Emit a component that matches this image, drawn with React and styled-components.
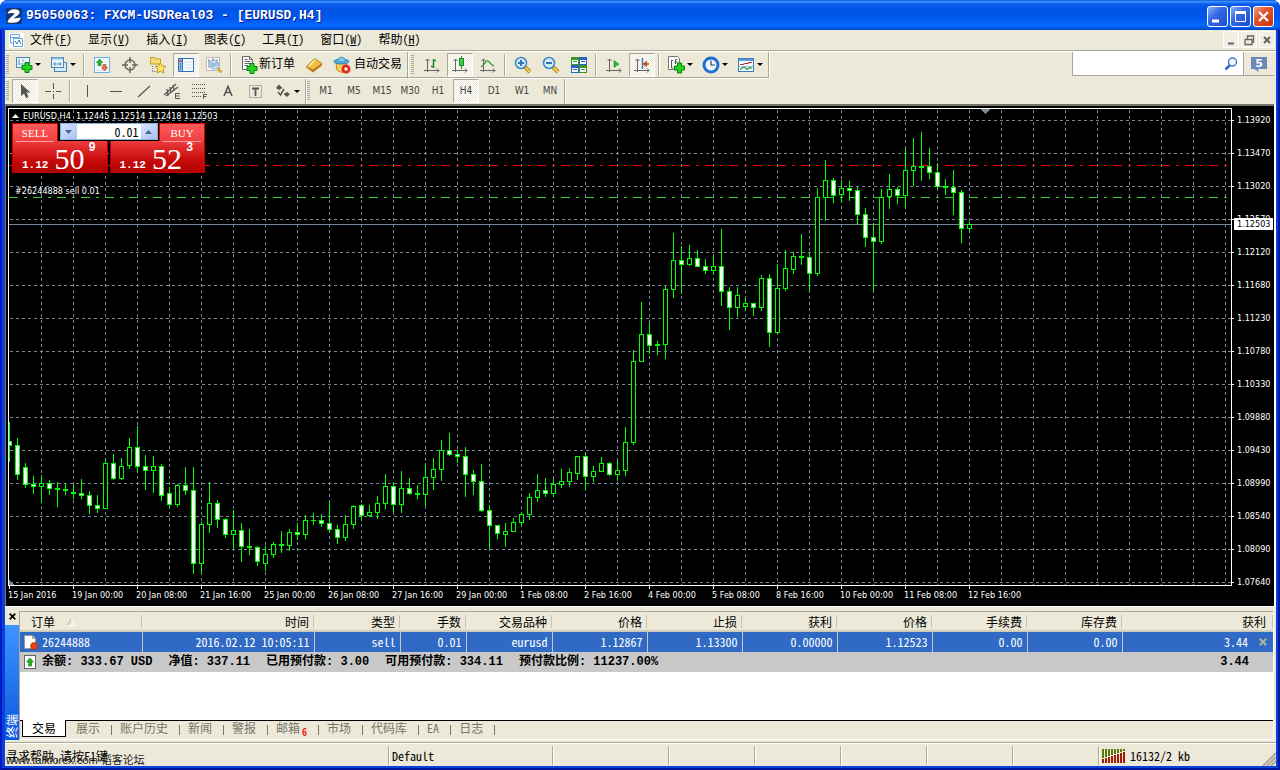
import React from "react";
import styled, { createGlobalStyle, css } from "styled-components";

const face = "#ece9d8";
const shade = "#aca899";
const slate = "#778899";

const Global = createGlobalStyle`
  * { box-sizing: border-box; }
  html, body { margin: 0; background: #fff; }
  body, button, input {
    font-family: "Noto Sans CJK SC", sans-serif;
    font-feature-settings: "hwid";
    font-size: 12px;
    line-height: 16px;
    color: #000;
  }
  button { border: 0; padding: 0; background: none; }
  ul, ol { list-style: none; margin: 0; padding: 0; }
  svg { display: block; flex: none; }
`;

/* ---------- window frame ---------- */

const Window = styled.div`
  display: flex;
  flex-direction: column;
  min-height: 100vh;
  padding: 0 4px 4px 5px;
  border-radius: 8px 8px 0 0;
  background: #0842d8;
  box-shadow: inset 2px 0 #0019c8, inset -2px 0 #0019a0, inset 0 -2px #00159c;
`;

const TitleBar = styled.header`
  display: flex;
  align-items: center;
  height: 30px;
  margin: 0 -4px 0 -5px;
  padding: 2px 6px 0 6px;
  border-radius: 8px 8px 0 0;
  background: linear-gradient(#0a4fd8 0, #3a93ff 5%, #0a5cee 14%, #0054e3 30%, #0058ee 60%, #0668ff 86%, #0351dd 96%, #0040b8 100%);
`;

const Title = styled.h1`
  flex: 1;
  margin: 0 0 0 4px;
  color: #fff;
  font: bold 13px/18px "Liberation Mono", monospace;
  text-shadow: 1px 1px #0a1883;
`;

const CaptionButtons = styled.div`
  display: flex;
  gap: 2px;
`;

const CaptionButton = styled.button`
  width: 21px;
  height: 21px;
  border: 1px solid #fff;
  border-radius: 3px;
  background: ${(p) =>
    p.$danger
      ? "linear-gradient(135deg, #f0a08a, #e0532b 40%, #c8330c)"
      : "linear-gradient(135deg, #8fb2f8, #3468e4 40%, #1c4ed0)"};
`;

/* ---------- menu ---------- */

const MenuBar = styled.nav`
  display: flex;
  align-items: center;
  height: 22px;
  padding-left: 4px;
  background: ${face};
  border-bottom: 1px solid #fff;
  box-shadow: inset 0 -1px ${shade};
`;

const MenuList = styled.ul`
  display: flex;
  flex: 1;
  gap: 16px;
  margin-left: 6px;
  padding-bottom: 4px;
`;

const MenuItem = styled.button`
  display: block;
  height: 18px;
  line-height: 16px;
`;

const MdiButton = styled.button`
  width: 16px;
  height: 17px;
  margin: 0 1px 2px;
  background: #f1efe4;
  border: 1px solid #fff;
`;

/* ---------- tool bars ---------- */

const ToolRow = styled.div`
  display: flex;
  justify-content: space-between;
  background: ${face};
`;

const Segments = styled.div`
  display: flex;
`;

const Segment = styled.div`
  display: flex;
  align-items: center;
  height: ${(p) => (p.$flat ? 25 : 27)}px;
  padding-bottom: 1px;
  border-right: 1px solid ${shade};
  border-bottom: ${(p) => (p.$flat ? "0" : "1px solid #fff")};
  box-shadow: 1px 0 #fff, inset 0 ${(p) => (p.$flat ? "0" : "-1px")} ${shade};
`;

const Grip = styled.span`
  width: 3px;
  height: 20px;
  margin: 0 ${(p) => (p.$wide ? 4 : 2)}px 0 ${(p) => (p.$wide ? 3 : 1)}px;
  background: repeating-linear-gradient(${shade} 0 1px, transparent 1px 2px);
`;

const Divider = styled.span`
  width: 2px;
  height: 22px;
  margin: 0 3px 0 2px;
  border-left: 1px solid ${shade};
  border-right: 1px solid #fff;
`;

const pressedLook = css`
  background: conic-gradient(#fff 25%, ${face} 0 50%, #fff 0 75%, ${face} 0) 0 0 / 2px 2px;
  border: 1px solid;
  border-color: ${shade} #fff #fff ${shade};
`;

const ToolButton = styled.button`
  display: flex;
  align-items: center;
  justify-content: center;
  width: 26px;
  height: 24px;
  margin: 0 1px;
  ${(p) => p.$pressed && pressedLook}
`;

const DropButton = styled.button`
  display: flex;
  align-items: center;
  gap: 2px;
  width: 35px;
  height: 24px;
  padding-left: 4px;
  &::after {
    content: "";
    border: 3px solid transparent;
    border-top-color: #000;
    border-bottom: 0;
  }
`;

const LabelButton = styled.button`
  display: flex;
  align-items: center;
  gap: ${(p) => p.$gap}px;
  height: 24px;
  padding: 0 5px;
  span { padding-bottom: 4px; }
`;

const PeriodButton = styled(ToolButton)`
  color: #444;
  font: 10px/14px "DejaVu Sans Condensed", "Noto Sans", sans-serif;
`;

const SearchBox = styled.form`
  display: flex;
  align-self: flex-start;
  height: 24px;
  margin-right: 2px;
  border-left: 1px solid ${shade};
  border-bottom: 1px solid ${shade};
`;

const SearchField = styled.label`
  display: flex;
  align-items: center;
  width: 171px;
  padding-right: 5px;
  background: #fff;
  border-right: 1px solid ${shade};
  input { flex: 1; min-width: 0; border: 0; outline: 0; background: none; }
`;

const ChatButton = styled.button`
  display: flex;
  align-items: center;
  justify-content: center;
  width: 30px;
`;

/* ---------- chart ---------- */

const Chart = styled.main`
  position: relative;
  flex: 1 0 auto;
  display: grid;
  grid-template-columns: minmax(0, 1fr) 42px;
  grid-template-rows: minmax(478px, 1fr) 20px;
  padding: 2px 0 0 2px;
  background: #000;
  border: 0 solid #77746a;
  border-width: 2px 0 0 1px;
  box-shadow: 2px 0 #fff;
  margin-right: 2px;
  color: #fff;
  font: 9px/12px "DejaVu Sans Condensed", "Noto Sans", sans-serif;
  font-feature-settings: normal;
`;

const Plot = styled.div`
  border: 1px solid #fff;
  svg { width: 100%; height: 100%; }
`;

const PriceAxis = styled.ol`
  position: relative;
  overflow: hidden;
  height: 0;
  min-height: 100%;
`;

const PriceTick = styled.li`
  display: flex;
  align-items: center;
  gap: 3px;
  height: 24px;
  margin-bottom: 9px;
  &::before { content: ""; width: 2px; height: 1px; background: #fff; }
`;

const LastPrice = styled.li`
  position: absolute;
  top: 110px;
  left: 2px;
  right: 1px;
  padding-left: 3px;
  background: #fff;
  color: #000;
`;

const TimeAxis = styled.ol`
  grid-column: 1 / -1;
  display: flex;
  overflow: hidden;
`;

const TimeTick = styled.li`
  flex: none;
  width: 64px;
  white-space: nowrap;
  &::before { content: ""; display: block; width: 1px; height: 3px; margin-left: 1px; background: #fff; }
`;

const Quote = styled.p`
  position: absolute;
  top: 4px;
  left: 6px;
  margin: 0;
  display: flex;
  align-items: center;
  gap: 4px;
  white-space: pre;
`;

const OrderNote = styled.p`
  position: absolute;
  top: 79px;
  left: 9px;
  margin: 0;
`;

const DealPanel = styled.section`
  position: absolute;
  top: 17px;
  left: 6px;
  width: 193px;
`;

const DealTop = styled.div`
  display: flex;
  justify-content: space-between;
  height: 18px;
  background: #000;
`;

const DealSide = styled.span`
  width: 46px;
  height: 18px;
  border: 1px solid #c80000;
  border-bottom: 0;
  background: linear-gradient(#ff5a5a, #f04040);
  color: #fff;
  text-align: center;
  font: 11px/18px "Liberation Serif", serif;
`;

const Volume = styled.div`
  display: flex;
  height: 17px;
  background: #fff;
  border: 1px solid #8fb0d8;
  input {
    width: 64px;
    border: 0;
    padding: 0 2px;
    text-align: right;
    background: #fff;
  }
  button {
    display: flex;
    align-items: center;
    justify-content: center;
    width: 16px;
    background: linear-gradient(135deg, #d6e2fb, #a9c2f4);
  }
`;

const DealPrices = styled.div`
  display: flex;
  gap: 2px;
`;

const DealButton = styled.button`
  position: relative;
  display: flex;
  align-items: flex-end;
  flex: 1;
  height: 32px;
  padding: 0 3px 1px 9px;
  border: 1px solid #c00000;
  border-top: 0;
  background: linear-gradient(#ee3c3c, #c80c0c 60%, #b00000);
  color: #fff;
  font: bold 11px/12px "Liberation Mono", monospace;
  &::before {
    content: "";
    position: absolute;
    top: 0;
    ${(p) => p.$edge}: 3px;
    width: 38px;
    height: 1px;
    background: #ff9a9a;
  }
  b { font: 30px/25px "Liberation Serif", serif; margin-left: 6px; }
  sup { align-self: flex-start; margin: 1px 0 0 4px; font-size: 12px; line-height: 12px; vertical-align: baseline; }
`;

/* ---------- terminal ---------- */

const Terminal = styled.section`
  display: flex;
  height: 136px;
  padding: 4px 2px 2px 0;
  background: ${face};
  border-top: 1px solid #fff;
`;

const TerminalRail = styled.div`
  display: flex;
  flex-direction: column;
  width: 14px;
`;

const CloseRail = styled.button`
  display: flex;
  justify-content: center;
  height: 14px;
  padding-top: 2px;
`;

const RailTitle = styled.h2`
  flex: 1;
  margin: 0;
  background: linear-gradient(#0b56e0, #3d95ff);
  color: #fff;
  font-weight: normal;
  font-size: 12px;
  line-height: 13px;
  padding-top: 2px;
  writing-mode: vertical-rl;
  text-orientation: sideways;
  transform: rotate(180deg);
`;

const TerminalBody = styled.div`
  flex: 1;
  min-width: 0;
  display: flex;
  flex-direction: column;
  border: 1px solid ${shade};
  border-color: ${shade} #fff #fff ${shade};
`;

const Sheet = styled.div`
  flex: 1;
  background: #fff;
  border-bottom: 1px solid #000;
`;

const Orders = styled.table`
  width: 100%;
  table-layout: fixed;
  border-collapse: collapse;
  th, td { height: 20px; padding: 0 4px; line-height: 16px; text-align: right; white-space: nowrap; }
  th {
    padding: 0 5px 1px;
    background: linear-gradient(to bottom, transparent 3px, #c5c2b2 3px 16px, transparent 16px) right / 1px 100% no-repeat,
      linear-gradient(#ece9d8 17px, #dbd8c8 18px, #c8c4b4 20px);
    font-weight: normal;
  }
  th:first-child { padding-left: 11px; text-align: left; }
  th:last-child { padding-right: 7px; }
  tbody td { background: #316ac5; color: #fff; border-right: 1px solid #c8c8c8; }
  tbody td:last-child { border: 0; padding-right: 6px; }
  tfoot td { background: #c8c8c8; font: bold 12px/18px "Liberation Mono", "Noto Sans CJK SC", monospace; }
  tfoot td:last-child { padding-right: 24px; }
`;

const Flow = styled.div`
  display: flex;
  align-items: center;
  justify-content: ${(p) => (p.$end ? "flex-end" : "flex-start")};
  gap: ${(p) => p.$gap}px;
`;

const Tabs = styled.div`
  display: flex;
  height: 18px;
  padding-left: 2px;
`;

const Tab = styled.button`
  position: relative;
  height: 14px;
  padding: 0;
  color: #77746a;
  line-height: 14px;
  &::after { content: ""; position: absolute; right: 8px; top: 4px; height: 10px; border-right: 1px solid #77746a; }
  &:not(:first-child) { padding: 0 20px 0 0; }
  sub { color: #f01818; font-weight: bold; font-size: 10px; line-height: 8px; margin-left: 2px; }
  ${(p) =>
    p.$active &&
    css`
      width: 44px;
      height: 17px;
      margin: -1px 10px 0 0;
      background: #fff;
      color: #000;
      border: 1px solid #000;
      border-top: 0;
      &::after { display: none; }
    `}
`;

const StatusBar = styled.footer`
  position: relative;
  display: flex;
  height: 24px;
  background: ${face};
  border-top: 1px solid ${shade};
  box-shadow: inset 0 1px #fff;
`;

const StatusCell = styled.div`
  display: flex;
  align-items: center;
  gap: 4px;
  flex: ${(p) => (p.$grow ? 1 : "none")};
  width: ${(p) => p.$w}px;
  margin: 3px 0 1px;
  padding: 1px 0 0 3px;
  border-left: 1px solid ${shade};
  box-shadow: inset 1px 0 #fff;
  white-space: nowrap;
  &:first-child { border: 0; box-shadow: none; padding-left: 1px; }
`;

const Watermark = styled.span`
  position: absolute;
  left: 1px;
  bottom: -1px;
  white-space: nowrap;
  font: 11px/14px "Liberation Sans", "Noto Sans CJK SC", sans-serif;
  color: #222;
`;

const Resize = styled.span`
  position: absolute;
  right: 0;
  bottom: 0;
`;

/* ---------- icons ---------- */

const Icon = ({ s = 18, h = s, children }) => (
  <svg width={s} height={h} viewBox={`0 0 ${s} ${h}`} aria-hidden="true">{children}</svg>
);

const Plus = ({ x, y }) => (
  <path transform={`translate(${x} ${y})`} d="M3.5 .5h4v3h3v4h-3v3h-4v-3h-3v-4h3z" fill="#22d322" stroke="#07800c" />
);

const Axes = ({ children }) => (
  <Icon>
    <path d="M4.5 3v13M1 14.500h15M2.500 5l2-2 2 2M14 12.500l2 2-2 2" fill="none" stroke="#666" />
    {children}
  </Icon>
);

const Lens = ({ plus }) => (
  <Icon>
    <path d="M11 11l5 5" stroke="#b98a16" strokeWidth="4" />
    <path d="M11 11l5 5" stroke="#f2cf56" strokeWidth="2" />
    <circle cx="7" cy="7" r="5.500" fill="#d3edfc" stroke="#3e86c0" strokeWidth="1.500" />
    <path d={plus ? "M4 7h6M7 4v6" : "M4 7h6"} stroke="#2f76b4" strokeWidth="2" />
  </Icon>
);

const I = {
  logo: (
    <Icon s={16}>
      <rect width="16" height="16" rx="1" fill="#12377c" />
      <path d="M1.500 5.500C3 .5 13 0 13.500 4c.3 3-4 4.500-6 6.500 2.500-.5 5-.5 7.500-1-1.500 5-6 6-13.500 5 .5-4 5.500-6.500 7-9-2-.8-4-.5-7 0z" fill="#fff" />
    </Icon>
  ),
  sheet: (
    <Icon s={15}>
      <rect width="15" height="15" fill="#fff" />
      <path d="M1.500 1.500h9v3h-9zM4.500 5.500h9v8h-9zM1.500 4v6h3" fill="none" stroke="#69a6dc" />
      <path d="M6 8l2 3 2-4 2 4" fill="none" stroke="#3477c4" />
    </Icon>
  ),
  newChart: (
    <Icon>
      <rect x="1.500" y="1.500" width="13" height="10" fill="#eaf6fd" stroke="#4788b8" />
      <path d="M4 3v6M3 5h2M3 8h8M8 3v3" stroke="#77a6c8" />
      <Plus x={6.500} y={6} />
    </Icon>
  ),
  profiles: (
    <Icon>
      <rect x="4.500" y="6.500" width="12" height="9" fill="#d5ebfa" stroke="#4788b8" />
      <rect x="1.500" y="1.500" width="12" height="10" fill="#eaf6fd" stroke="#4788b8" />
      <path d="M2 2.500h11" stroke="#89bde0" strokeWidth="2" />
      <path d="M3 8h9M5 6v4M10 6v4" stroke="#5595c5" />
    </Icon>
  ),
  market: (
    <Icon>
      <rect x="1.500" y="1.500" width="15" height="15" fill="#f7fbff" stroke="#68b0e4" />
      <path d="M3 6h12M3 10h12M3 14h12" stroke="#cfe3f2" />
      <path d="M6.500 3l3 3.500H8v3H5v-3H3.500z" fill="#27b51f" stroke="#107a10" strokeWidth=".6" />
      <path d="M11.500 15l-3-3.500H10v-3h3v3h1.500z" fill="#f0704a" stroke="#b33a1a" strokeWidth=".6" />
    </Icon>
  ),
  target: (
    <Icon>
      <circle cx="9" cy="9" r="5" fill="none" stroke="#666" strokeWidth="1.500" />
      <path d="M9 1v6M9 11v6M1 9h6M11 9h6" stroke="#666" strokeWidth="1.500" />
    </Icon>
  ),
  favorites: (
    <Icon>
      <path d="M1.500 1.500h4l1 1.500h5v5h-10z" fill="#f8dc7c" stroke="#c79a1c" />
      <path d="M3.500 10v6M3.500 15.500h5" stroke="#777" strokeDasharray="1 1" />
      <path d="M11.500 6.500l1.700 3.400 3.800.5-2.800 2.700.7 3.900-3.400-1.900-3.400 1.900.7-3.900L6 10.400l3.800-.5z" fill="#ffe372" stroke="#c8981a" />
    </Icon>
  ),
  navigator: (
    <Icon>
      <rect x="1" y="2" width="16" height="14" rx="1" fill="#2b6fc0" />
      <rect x="2" y="3" width="3" height="12" fill="#8fc0ec" />
      <rect x="6" y="3" width="10" height="12" fill="#f4faff" />
      <path d="M8 6h7M8 9h7M8 12h7" stroke="#cfe0ee" />
      <path d="M2.500 5h2" stroke="#e33" strokeWidth="2" />
      <path d="M3 8h1M3 10.500h1M3 13h1" stroke="#234" />
    </Icon>
  ),
  tester: (
    <Icon>
      <rect x="1.500" y="1.500" width="13" height="13" fill="#fff" stroke="#bbb" />
      <path d="M4 3v9M8 2v10M12 3v6M3 5h2M7 4h2" stroke="#8a8a8a" />
      <circle cx="9" cy="8.500" r="4.500" fill="#cfe6f8" fillOpacity=".85" stroke="#6da5d2" />
      <path d="M7 6v5M9 7v4M11 6v4" stroke="#6f8ea8" />
      <path d="M12.500 12l4 4.500" stroke="#d4a32c" strokeWidth="2.500" />
    </Icon>
  ),
  order: (
    <Icon>
      <path d="M2.500 .5h7l3 3v10h-10z" fill="#fff" stroke="#666" />
      <path d="M9.500 .5v3h3M4.500 5.500h6M4.500 7.500h6M4.500 9.500h4M4.500 3.500h3" fill="none" stroke="#666" />
      <Plus x={6.500} y={7} />
    </Icon>
  ),
  book: (
    <Icon>
      <path d="M1 11l7 5.500 9-7v-2L8 14z" fill="#b9780e" />
      <path d="M1 11L8.500 3.500C11 2 12 4 13 5l4 2.500L8 14z" fill="#f0bd3e" stroke="#a86e10" strokeWidth=".8" />
      <path d="M4 10l6-6" stroke="#fff0a6" strokeWidth="1.500" />
    </Icon>
  ),
  auto: (
    <Icon>
      <path d="M3 7l1 7c3 3 8 3 11 0l-2-7z" fill="#f3cd5f" stroke="#bd8a1c" />
      <ellipse cx="8.500" cy="5.500" rx="7.500" ry="2.500" fill="#5db0e2" stroke="#2d7eb5" />
      <path d="M4.500 5C5 0 12 0 12.500 5c-2 1.500-6 1.500-8 0z" fill="#83cbee" stroke="#2d7eb5" strokeWidth=".8" />
      <circle cx="13" cy="13" r="4.500" fill="#e02818" />
      <rect x="11.500" y="11.500" width="3" height="3" fill="#fff" />
    </Icon>
  ),
  bars: <Axes><path d="M10.500 3v9M8 10.500h2M11 4.500h2" stroke="#178a22" strokeWidth="1.500" /></Axes>,
  candles: (
    <Axes>
      <path d="M10.500 0v13" stroke="#178a22" />
      <rect x="8.500" y="2.500" width="4" height="7" fill="#35cf45" stroke="#178a22" />
    </Axes>
  ),
  line: <Axes><path d="M2 11c4-3 5-7 7-6s3 4 6 5" fill="none" stroke="#2e9a38" strokeWidth="1.200" /></Axes>,
  tile: (
    <Icon>
      {[[1, 1, "#3c9a24"], [9, 1, "#2b62c4"], [1, 9, "#2b62c4"], [9, 9, "#3c9a24"]].map(([x, y, c]) => (
        <g key={`${x}${y}`}>
          <rect x={x} y={y} width="8" height="8" fill={c} />
          <rect x={x + 1} y={y + 3} width="6" height="4" fill="#f4f9ff" />
          <path d={`M${x + 2} ${y + 4.500}h4`} stroke={c} />
        </g>
      ))}
    </Icon>
  ),
  scroll: <Axes><path d="M9 4.500l5 3.500-5 3.500z" fill="#30b83c" stroke="#178a22" strokeWidth=".6" /></Axes>,
  shift: (
    <Axes>
      <path d="M9.500 2v11" stroke="#3877a8" strokeWidth="1.500" />
      <path d="M16 8h-4M14 5.500L11 8l3 2.500" fill="none" stroke="#c43b12" strokeWidth="1.500" />
    </Axes>
  ),
  indicators: (
    <Icon>
      <path d="M1.500 .5h9l2 2v11h-11z" fill="#fff" stroke="#777" />
      <path d="M4.500 4v8h2M4 4.500h2M10 3.500H8.500V8M7.500 6h3" fill="none" stroke="#555" />
      <Plus x={7} y={6.500} />
    </Icon>
  ),
  clock: (
    <Icon>
      <circle cx="9" cy="9" r="7" fill="#eaf5ff" stroke="#1f6fd0" strokeWidth="3" />
      <path d="M9 4.500V9h4" fill="none" stroke="#345" strokeWidth="1.200" />
    </Icon>
  ),
  template: (
    <Icon>
      <rect x="1.500" y="2.500" width="15" height="13" fill="#f7fbff" stroke="#3b7cc0" />
      <path d="M2 4h14" stroke="#5a9ada" strokeWidth="2" />
      <path d="M3 8.500h3l2-1h3l1-1h3" fill="none" stroke="#a33" strokeWidth="1.200" />
      <path d="M3 13.500l3-2h2l2 2 3-2 2 1" fill="none" stroke="#2a9a38" strokeWidth="1.200" />
      <path d="M2 10.500h14" stroke="#9bbcd8" />
    </Icon>
  ),
  cursor: <Icon><path d="M5 2v12l3-2.500 2 4.500 2.500-1-2-4.500h4z" fill="#555" /></Icon>,
  cross: <Icon><path d="M9.500 1v6M9.500 12v5M1 9.500h6M12 9.500h5M9 9.500h1" stroke="#555" /></Icon>,
  vline: <Icon><path d="M8.500 3v12" stroke="#555" /></Icon>,
  hline: <Icon><path d="M3 9.500h12" stroke="#555" /></Icon>,
  trend: <Icon><path d="M3 15L15 4" stroke="#555" strokeWidth="1.200" /></Icon>,
  channel: (
    <Icon>
      <path d="M1 13L13 2M3 14L15 5M4 7l1 7M7 5l1 6M10 3l1 6" stroke="#555" strokeWidth="1.200" />
      <path d="M17 11.500h-4.500v5H17M12.500 14h4" fill="none" stroke="#555" />
    </Icon>
  ),
  fibo: (
    <Icon>
      <path d="M1 2.500h14M1 6.500h14M1 10.500h14M1 14.500h9" stroke="#555" strokeDasharray="1 1" />
      <path d="M16 12.500h-3.500V17M12.500 14.500h3" fill="none" stroke="#555" />
    </Icon>
  ),
  text: <Icon><path d="M5 14L9 4.500 13 14M6.500 10.500h5" fill="none" stroke="#555" strokeWidth="1.600" /></Icon>,
  label: (
    <Icon>
      <rect x="2.500" y="3.500" width="12" height="12" fill="none" stroke="#777" strokeDasharray="1 1" />
      <path d="M5 6.500h7M8.500 6.500V14" stroke="#555" strokeWidth="1.800" />
    </Icon>
  ),
  arrows: (
    <Icon>
      <path d="M5 2.500L8.500 6 5 8 2 6zM13 15l-3.500-3 3.500-2 3 2z" fill="#555" />
      <path d="M4 10l2.500 3L10 7" fill="none" stroke="#555" strokeWidth="1.500" />
    </Icon>
  ),
  search: (
    <Icon s={14}>
      <path d="M1.500 12.500L6 8" stroke="#3568c8" strokeWidth="2.500" />
      <circle cx="8.500" cy="5" r="4" fill="#f2f8ff" stroke="#4478cc" strokeWidth="1.500" />
    </Icon>
  ),
};

const Cross = ({ color = "#000", size = 7 }) => (
  <svg width={size} height={size} viewBox="0 0 7 7"><path d="M.7 .7l5.600 5.600M6.300 .7L.7 6.300" stroke={color} strokeWidth="1.700" /></svg>
);

/* ---------- data ---------- */

const menus = [["文件", "F"], ["显示", "V"], ["插入", "I"], ["图表", "C"], ["工具", "T"], ["窗口", "W"], ["帮助", "H"]];
const periods = ["M1", "M5", "M15", "M30", "H1", "H4", "D1", "W1", "MN"];
const prices = ["1.13920", "1.13470", "1.13020", "1.12570", "1.12120", "1.11680", "1.11230", "1.10780", "1.10330", "1.09880", "1.09430", "1.08990", "1.08540", "1.08090", "1.07640"];
const times = ["15 Jan 2016", "19 Jan 00:00", "20 Jan 08:00", "21 Jan 16:00", "25 Jan 00:00", "26 Jan 08:00", "27 Jan 16:00", "29 Jan 00:00", "1 Feb 08:00", "2 Feb 16:00", "4 Feb 00:00", "5 Feb 08:00", "8 Feb 16:00", "10 Feb 00:00", "11 Feb 08:00", "12 Feb 16:00"];

/* One bar per entry: high, open/close top, open/close bottom, low; 1 marks a falling bar. */
const PLOT_TOP = 109;
const bars = `422 441 446 462 1|438 445 475 480 1|463 467 485 488 1|476 484 487 494 1|475 483 487 503 0|480 483 489 495 1|482 488 490 507 0|483 489 491 495 0|485 492 494 499 0|479 493 496 499 1
491 495 506 514 1|495 505 509 513 1|460 463 509 509 0|454 463 479 480 1|458 466 479 480 0|438 447 466 469 0|426 447 467 472 1|455 466 471 490 1|456 466 471 493 0|464 466 496 501 1
487 493 505 508 1|484 485 505 507 0|467 485 491 495 1|467 490 564 574 1|522 524 564 573 0|482 503 525 533 0|500 503 520 528 1|518 519 535 538 1|510 530 535 549 0|523 530 547 562 1
529 546 548 555 0|546 547 562 566 1|546 554 564 571 0|542 544 555 558 0|531 544 546 553 0|529 532 546 551 0|523 532 535 540 1|515 520 535 539 0|513 520 521 525 0|514 520 524 527 1
502 523 530 532 1|525 529 538 544 1|515 524 538 541 0|505 506 525 529 0|504 505 516 520 1|505 512 516 517 0|496 503 513 519 0|474 486 504 509 0|482 486 505 512 1|471 488 505 513 0
478 488 494 495 1|485 493 495 499 0|463 477 495 506 0|458 469 478 490 0|440 450 470 481 0|433 450 455 456 1|450 454 457 463 1|447 456 475 497 1|470 474 482 495 1|464 481 511 512 1
505 510 526 550 1|525 525 534 539 1|523 531 535 547 0|518 522 532 532 0|512 514 523 527 0|493 497 515 520 0|474 490 498 502 0|478 490 494 497 1|478 484 494 497 0|469 481 485 488 0
468 472 482 487 0|456 456 474 480 0|453 456 477 490 1|466 471 477 482 0|457 463 472 472 0|462 463 475 476 1|461 470 475 481 0|427 442 471 476 0|350 361 443 445 0|302 334 362 362 0
323 334 346 354 1|341 344 346 355 0|286 289 345 359 0|233 260 290 298 0|246 260 265 294 1|245 258 265 266 0|250 258 267 267 1|259 266 271 274 1|256 266 271 275 0|229 266 292 306 1
287 291 308 330 1|287 295 308 317 0|299 303 307 311 0|303 303 308 316 1|275 278 308 311 0|274 278 333 347 1|264 288 333 334 0|250 268 289 291 0|252 256 270 274 0|234 256 258 265 0
252 257 274 291 1|188 197 274 276 0|160 180 198 221 0|178 180 196 203 1|180 188 195 203 0|181 188 191 201 1|187 190 215 225 1|208 214 238 247 1|223 237 242 292 1|189 197 242 244 0
174 189 197 209 0|187 189 196 204 1|148 170 196 208 0|138 166 171 186 0|132 166 168 181 0|148 166 173 179 1|163 172 187 189 1|179 186 188 195 0|170 187 193 215 1|190 192 229 243 1
222 224 229 231 0`
  .split(/[|\n]/)
  .map((row) => row.split(" ").map(Number));

const Candle = ({ x, bar: [high, top, bottom, low, falling] }) => {
  const t = top - PLOT_TOP;
  const b = bottom - PLOT_TOP;
  return (
    <g>
      <rect x={x} y={high - PLOT_TOP} width="1" height={low - high} fill="#0f0" />
      <rect x={x - 2} y={t} width="5" height={b - t} fill="#0f0" />
      {b - t > 2 && <rect x={x - 1} y={t + 1} width="3" height={b - t - 2} fill={falling ? "#fff" : "#000"} />}
    </g>
  );
};

const PricePlot = () => (
  <svg shapeRendering="crispEdges" role="img" aria-label="EURUSD,H4">
    <defs>
      <pattern id="columns" width="32" height="6" patternUnits="userSpaceOnUse">
        <rect y="1" width="1" height="3" fill={slate} />
      </pattern>
      <pattern id="rows" y="11" width="6" height="33" patternUnits="userSpaceOnUse">
        <rect x="1" width="3" height="1" fill={slate} />
      </pattern>
    </defs>
    <rect x="32" width="100%" height="100%" fill="url(#columns)" />
    <rect width="100%" height="100%" fill="url(#rows)" />
    <line x2="100%" y1="56.500" y2="56.500" stroke="#f00" strokeDasharray="9 6 3 6" />
    <line x2="100%" y1="88.500" y2="88.500" stroke="#32cd32" strokeDasharray="9 6 3 6" />
    <line x2="100%" y1="115.500" y2="115.500" stroke={slate} />
    {bars.map((bar, i) => <Candle key={i} x={i * 8} bar={bar} />)}
    <path d="M971 0h11l-5.500 5z" fill={slate} />
    <svg y="100%" overflow="visible"><path d="M0 -5l5 5h-5z" fill={slate} /></svg>
  </svg>
);

const columns = [
  ["时间", "2016.02.12 10:05:11", 172],
  ["类型", "sell", 86],
  ["手数", "0.01", 66],
  ["交易品种", "eurusd", 86],
  ["价格", "1.12867", 95],
  ["止损", "1.13300", 95],
  ["获利", "0.00000", 95],
  ["价格", "1.12523", 95],
  ["手续费", "0.00", 95],
  ["库存费", "0.00", 95],
];
const totals = ["余额: 333.67 USD", "净值: 337.11", "已用预付款: 3.00", "可用预付款: 334.11", "预付款比例: 11237.00%"];
const tabs = ["展示", "账户历史", "新闻", "警报", "邮箱", "市场", "代码库", "EA", "日志"];

const Tool = ({ icon, name, pressed }) => (
  <ToolButton type="button" aria-label={name} $pressed={pressed} aria-pressed={pressed}>{I[icon]}</ToolButton>
);
const Drop = ({ icon, name }) => <DropButton type="button" aria-label={name}>{I[icon]}</DropButton>;

export default function App() {
  return (
    <>
      <Global />
      <Window>
        <TitleBar>
          {I.logo}
          <Title>95050063: FXCM-USDReal03 - [EURUSD,H4]</Title>
          <CaptionButtons>
            <CaptionButton aria-label="最小化"><Icon s={19}><path d="M4 14h7" stroke="#fff" strokeWidth="3" /></Icon></CaptionButton>
            <CaptionButton aria-label="最大化"><Icon s={19}><path d="M4.500 5v9.500h10V5" fill="none" stroke="#fff" /><path d="M4 5.500h11" stroke="#fff" strokeWidth="3" /></Icon></CaptionButton>
            <CaptionButton aria-label="关闭" $danger><Icon s={19}><path d="M5 5l9 9M14 5l-9 9" stroke="#fff" strokeWidth="2.200" /></Icon></CaptionButton>
          </CaptionButtons>
        </TitleBar>

        <MenuBar>
          {I.sheet}
          <MenuList>
            {menus.map(([name, key]) => (
              <li key={key}><MenuItem>{name}(<u>{key}</u>)</MenuItem></li>
            ))}
          </MenuList>
          <MdiButton aria-label="最小化图表"><Icon s={14}><path d="M4 10.500h6" stroke="#666" strokeWidth="2" /></Icon></MdiButton>
          <MdiButton aria-label="还原图表"><Icon s={14}><path d="M3 6.500h7v5H3zM5.500 6V3h6v6H10" fill="none" stroke="#666" strokeWidth="1.300" /></Icon></MdiButton>
          <MdiButton aria-label="关闭图表"><Icon s={14}><path d="M4 4l6 6M10 4l-6 6" stroke="#666" strokeWidth="2" /></Icon></MdiButton>
        </MenuBar>

        <ToolRow>
          <Segments>
            <Segment>
              <Grip />
              <Drop icon="newChart" name="新图表" />
              <Drop icon="profiles" name="配置文件" />
              <Divider />
              <Tool icon="market" name="市场报价" />
              <Tool icon="target" name="数据窗口" />
              <Tool icon="favorites" name="导航" />
              <Tool icon="navigator" name="终端" pressed />
              <Tool icon="tester" name="策略测试" />
              <Divider />
              <LabelButton type="button" $gap={1}>{I.order}<span>新订单</span></LabelButton>
              <Tool icon="book" name="编辑器" />
              <LabelButton type="button" $gap={3}>{I.auto}<span>自动交易</span></LabelButton>
            </Segment>
            <Segment>
              <Grip $wide />
              <Tool icon="bars" name="柱状图" />
              <Tool icon="candles" name="蜡烛图" pressed />
              <Tool icon="line" name="折线图" />
              <Divider />
              <ToolButton type="button" aria-label="放大"><Lens plus /></ToolButton>
              <ToolButton type="button" aria-label="缩小"><Lens /></ToolButton>
              <Tool icon="tile" name="平铺窗口" />
              <Divider />
              <Tool icon="scroll" name="自动滚动" />
              <Tool icon="shift" name="图表平移" pressed />
              <Divider />
              <Drop icon="indicators" name="指标列表" />
              <Drop icon="clock" name="时段" />
              <Drop icon="template" name="模板" />
            </Segment>
          </Segments>
          <SearchBox role="search">
            <SearchField><input type="text" aria-label="搜索" />{I.search}</SearchField>
            <ChatButton type="button" aria-label="消息 5">
              <Icon s={18}>
                <path d="M1 2h16v12H8l1 3-5-3H1z" fill="#6b88b8" />
                <text x="9" y="12" textAnchor="middle" fill="#fff" fontSize="11" fontWeight="bold" fontFamily="DejaVu Sans, sans-serif">5</text>
              </Icon>
            </ChatButton>
          </SearchBox>
        </ToolRow>

        <ToolRow>
          <Segments>
            <Segment $flat>
              <Grip />
              <Tool icon="cursor" name="光标" pressed />
              <Tool icon="cross" name="十字准线" />
              <Divider />
              <Tool icon="vline" name="垂直线" />
              <Tool icon="hline" name="水平线" />
              <Tool icon="trend" name="趋势线" />
              <Tool icon="channel" name="等距通道" />
              <Tool icon="fibo" name="斐波纳契" />
              <Tool icon="text" name="文字" />
              <Tool icon="label" name="文字标签" />
              <Drop icon="arrows" name="箭头" />
            </Segment>
            <Segment $flat>
              <Grip />
              {periods.map((p) => <PeriodButton key={p} type="button" $pressed={p === "H4"}>{p}</PeriodButton>)}
            </Segment>
          </Segments>
        </ToolRow>

        <Chart>
          <Plot><PricePlot /></Plot>
          <PriceAxis>
            {prices.map((p) => <PriceTick key={p}>{p}</PriceTick>)}
            <LastPrice>1.12503</LastPrice>
          </PriceAxis>
          <TimeAxis>{times.map((t) => <TimeTick key={t}>{t}</TimeTick>)}</TimeAxis>

          <Quote>
            <svg width="7" height="4" viewBox="0 0 7 4"><path d="M0 4L3.500 0 7 4z" fill="#fff" /></svg>
            <span>EURUSD,H4  1.12445 1.12514 1.12418 1.12503</span>
          </Quote>
          <DealPanel>
            <DealTop>
              <DealSide>SELL</DealSide>
              <Volume>
                <button type="button" aria-label="减少"><svg width="7" height="4" viewBox="0 0 7 4"><path d="M0 0h7L3.500 4z" fill="#4a6494" /></svg></button>
                <input type="text" defaultValue="0.01" aria-label="手数" />
                <button type="button" aria-label="增加"><svg width="7" height="4" viewBox="0 0 7 4"><path d="M0 4h7L3.500 0z" fill="#4a6494" /></svg></button>
              </Volume>
              <DealSide>BUY</DealSide>
            </DealTop>
            <DealPrices>
              <DealButton type="button" $edge="left">1.12<b>50</b><sup>9</sup></DealButton>
              <DealButton type="button" $edge="right">1.12<b>52</b><sup>3</sup></DealButton>
            </DealPrices>
          </DealPanel>
          <OrderNote>#26244888 sell 0.01</OrderNote>
        </Chart>

        <Terminal>
          <TerminalRail>
            <CloseRail type="button" aria-label="关闭终端"><Cross /></CloseRail>
            <RailTitle>终端</RailTitle>
          </TerminalRail>
          <TerminalBody>
            <Sheet>
              <Orders>
                <colgroup>
                  <col width="122" />
                  {columns.map(([, , w], i) => <col key={i} width={w} />)}
                  <col />
                </colgroup>
                <thead>
                  <tr>
                    <th><Flow $gap={12}>订单<svg width="9" height="8" viewBox="0 0 9 8"><path d="M.5 7.500L4.500 .5" stroke={shade} /><path d="M4.500 .5l4 7h-8" fill="none" stroke="#fff" /></svg></Flow></th>
                    {columns.map(([name], i) => <th key={i}>{name}</th>)}
                    <th>获利</th>
                  </tr>
                </thead>
                <tbody>
                  <tr>
                    <td>
                      <Flow $gap={4}>
                        <Icon s={14} h={16}>
                          <path d="M.5 1.500h8l3 3v10H.5z" fill="#fff" stroke="#999" />
                          <path d="M8.500 1.500v3h3" fill="none" stroke="#999" />
                          <circle cx="10" cy="12" r="3.500" fill="#e8421c" stroke="#a82808" strokeWidth=".6" />
                        </Icon>
                        26244888
                      </Flow>
                    </td>
                    {columns.map(([, value], i) => <td key={i}>{value}</td>)}
                    <td><Flow $end $gap={11}>3.44<Cross color="#b8b0a0" size={8} /></Flow></td>
                  </tr>
                </tbody>
                <tfoot>
                  <tr>
                    <td colSpan={11}>
                      <Flow $gap={16}>
                        <Flow $gap={6}>
                          <Icon s={12} h={14}>
                            <rect x=".5" y=".5" width="11" height="13" fill="#fff" stroke="#666" />
                            <path d="M6 3l3.500 4H7.500v4h-3V7h-2z" fill="#25b025" stroke="#0a750a" strokeWidth=".6" />
                          </Icon>
                          {totals[0]}
                        </Flow>
                        {totals.slice(1).map((t) => <span key={t}>{t}</span>)}
                      </Flow>
                    </td>
                    <td>3.44</td>
                  </tr>
                </tfoot>
              </Orders>
            </Sheet>
            <Tabs role="tablist">
              <Tab role="tab" aria-selected="true" $active>交易</Tab>
              {tabs.map((t) => (
                <Tab key={t} role="tab" aria-selected="false">{t}{t === "邮箱" && <sub>6</sub>}</Tab>
              ))}
            </Tabs>
          </TerminalBody>
        </Terminal>

        <StatusBar>
          <StatusCell $grow>寻求帮助,请按F1键</StatusCell>
          <StatusCell $w={164}>Default</StatusCell>
          <StatusCell $w={116} />
          {[1, 2, 3, 4, 5].map((n) => <StatusCell key={n} $w={86} />)}
          <StatusCell $w={178}>
            <Icon s={24} h={14}>
              {[0, 1, 2, 3, 4, 5, 6, 7].map((n) => (
                <g key={n}>
                  <rect x={n * 3} y="0" width="2" height={9 - n} fill="#5a7a10" />
                  <rect x={n * 3} y={10 - n} width="2" height={4 + n} fill="#a01c08" />
                </g>
              ))}
            </Icon>
            16132/2 kb
          </StatusCell>
          <Watermark>www.talkforex.com 韬客论坛</Watermark>
          <Resize><Icon s={14}><path d="M1 14L14 1M5 14l9-9M9 14l5-5" stroke={shade} strokeWidth="2" /></Icon></Resize>
        </StatusBar>
      </Window>
    </>
  );
}
